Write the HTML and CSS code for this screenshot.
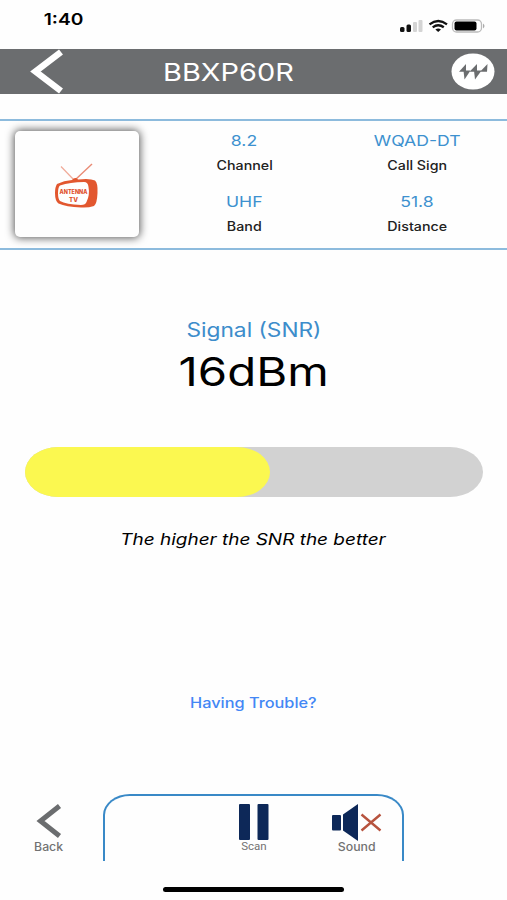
FILE: index.html
```html
<!DOCTYPE html>
<html lang="en">
<head>
<meta charset="utf-8">
<title>BBXP60R</title>
<link rel="stylesheet" href="styles.css">
</head>
<body>
<main class="phone">
  <div class="status">
    <span class="clock wide">1:40</span>
    <svg class="status-icons" width="90" height="18" viewBox="0 0 90 18">
      <g fill="#111"><rect x="2" y="10" width="4.500" height="5" rx="1.500"/><rect x="8.500" y="7.500" width="4.500" height="7.500" rx="1.500"/></g>
      <g fill="#d4d4d4"><rect x="15" y="5" width="4" height="10" rx="1"/><rect x="20.500" y="3" width="4" height="12" rx="1"/></g>
      <g fill="none" stroke="#111" stroke-width="2.300"><path d="M31.500 7.300Q40.200 .700 49 7.300"/><path d="M34.700 10.300Q40.200 6.200 45.800 10.300"/></g>
      <path d="M37.400 12.400Q40.200 10.600 43 12.400L40.200 15Z" fill="#111"/>
      <rect x="54.500" y="3" width="29" height="12" rx="4" fill="#fff" stroke="#bbb" stroke-width="1.300"/>
      <rect x="56.500" y="4.500" width="22" height="9" rx="2" fill="#000"/>
      <path d="M85 6.500Q88 9 85 11.500Z" fill="#aaa"/>
    </svg>
  </div>
  <header class="bar">
    <svg class="bar-back" width="34" height="45" viewBox="0 0 34 45"><path d="M31 3L5.500 22.500L31 42" fill="none" stroke="#fff" stroke-width="6.500"/></svg>
    <h1 class="title wide">BBXP60R</h1>
    <svg class="logo" width="44" height="37" viewBox="0 0 44 37">
      <ellipse cx="22" cy="18.500" rx="21.500" ry="18" fill="#fff"/>
      <g fill="#6b6d6f"><path d="M8 18.800L15 11V18.800Z"/><path d="M12.500 17.500H19.500L13.500 26.500Z"/><path d="M18.500 18.800L26 11V18.800Z"/><path d="M23 17.500H30.500L24 26.500Z"/><path d="M29 18.800L36.500 11L36 18.800Z"/></g>
    </svg>
  </header>
  <section class="info">
    <div class="card">
      <svg width="46" height="46" viewBox="0 0 46 46">
        <path d="M7 3.500L20.500 17.500" stroke="#f0aa98" stroke-width="1.200"/><path d="M38 1L20.500 17.500" stroke="#e98a74" stroke-width="1.400"/>
        <path fill="#e2572f" fill-rule="evenodd" d="M3 21Q10 17.500 18 17Q21 13.500 24 16.500Q36 15 41 17.500Q44 20 43.500 30Q43 41 40 43Q34 45 27 44.500Q12 44 4.500 40.500Q1 38 1 30Q1 24 3 21ZM6 22.500Q16 19 30 19Q34 19 34.500 24Q36 32 32.500 39Q31.500 42 27 42Q12 41.500 6 38Q4 36 4 30Q4 24 6 22.500Z"/>
        <g fill="#e04f2c" font-family="Inter, sans-serif" font-weight="800" text-anchor="middle"><text x="19.500" y="31" font-size="6" textLength="28" lengthAdjust="spacingAndGlyphs">ANTENNA</text><text x="19.500" y="38.500" font-size="6" textLength="9" lengthAdjust="spacingAndGlyphs">TV</text></g>
      </svg>
    </div>
    <dl class="facts">
      <div class="fact"><dd class="wide">8.2</dd><dt class="wide">Channel</dt></div>
      <div class="fact"><dd class="wide">WQAD-DT</dd><dt class="wide">Call Sign</dt></div>
      <div class="fact"><dd class="wide">UHF</dd><dt class="wide">Band</dt></div>
      <div class="fact"><dd class="wide">51.8</dd><dt class="wide">Distance</dt></div>
    </dl>
  </section>
  <section class="signal">
    <h2 class="signal-label wide">Signal (SNR)</h2>
    <p class="signal-value wide">16dBm</p>
    <div class="meter"><div class="fill"></div></div>
    <p class="hint wide">The higher the SNR the better</p>
    <a class="help wide">Having Trouble?</a>
  </section>
  <footer class="footer">
    <div class="back">
      <svg width="26" height="34" viewBox="0 0 26 34"><path d="M23.500 2L4.500 17L23.500 32" fill="none" stroke="#6b6d6f" stroke-width="5"/></svg>
      <span class="caption wide">Back</span>
    </div>
    <nav class="dock">
      <span></span>
      <div class="action">
        <svg width="30" height="36" viewBox="0 0 30 36" fill="#0d2858"><rect width="11" height="36" rx="1"/><rect x="18.500" width="11" height="36" rx="1"/></svg>
        <span class="caption scan">Scan</span>
      </div>
      <div class="action sound">
        <svg width="50" height="37" viewBox="0 0 50 37"><g fill="#0d2858"><rect y="11" width="9" height="15.500" rx="1"/><path d="M11 10.500L26 0V37L11 26.500Z"/></g><path d="M29.500 10.500L48.500 26.500M48.500 10.500L29.500 26.500" stroke="#b7533e" stroke-width="2.400"/></svg>
        <span class="caption wide">Sound</span>
      </div>
    </nav>
  </footer>
  <div class="home"></div>
</main>
</body>
</html>
```
FILE: styles.css
```css
* { box-sizing: border-box; margin: 0; }
body { background: #fefefe; font-family: Inter, "Liberation Sans", sans-serif; color: #000; }
.phone { width: 507px; height: 900px; display: flex; flex-direction: column; overflow: hidden; }
.wide { display: block; white-space: nowrap; transform: scaleX(1.2); }
.status { height: 49px; flex: none; display: flex; justify-content: space-between; padding: 9px 19px 0 47px; }
.clock { font-size: 16px; line-height: 20px; font-weight: 600; }
.status-icons { margin-top: 8px; }
.bar { height: 45px; flex: none; background: #6b6d6f; display: grid; grid-template-columns: 100px 257px 150px; align-items: center; }
.bar-back { margin-left: 30px; }
.title { font-size: 24.500px; line-height: 30px; font-weight: 400; color: #fff; justify-self: center; transform: scaleX(1.18); }
.logo { justify-self: end; margin-right: 12px; }
.info { height: 131px; flex: none; margin-top: 25px; border-top: 2px solid #8dbbdd; border-bottom: 2px solid #8dbbdd; display: flex; }
.card { width: 124px; height: 106px; margin: 10px 0 0 15px; background: #fefefe; border-radius: 5px; box-shadow: 0 0 8px 1px rgba(0,0,0,.65); display: flex; align-items: center; justify-content: center; padding-top: 3px; }
.facts { width: 345px; margin: 10px 0 0 19px; display: grid; grid-template-columns: 1fr 1fr; grid-template-rows: 61px 61px; }
.fact { display: flex; flex-direction: column; align-items: center; }
.fact dd { font-size: 14.700px; line-height: 20px; color: #3d91cf; }
.fact dt { font-size: 12.500px; line-height: 20px; margin-top: 5px; color: #222; font-weight: 500; transform: scaleX(1.14); }
.signal { flex: 1; display: flex; flex-direction: column; align-items: center; }
.signal-label { margin-top: 68px; font-size: 19.500px; line-height: 24px; font-weight: 400; color: #3d8dcb; transform: scaleX(1.165); }
.signal-value { margin-top: 6px; font-size: 39.500px; line-height: 48px; }
.meter { width: 458px; height: 50px; margin-top: 51px; border-radius: 33px / 25px; background: #d2d2d2; }
.fill { width: 245px; height: 50px; border-radius: 33px / 25px; background: #fbf850; }
.hint { margin-top: 32px; font-size: 16px; line-height: 20px; font-style: italic; transform: scaleX(1.185); }
.help { margin-top: 144px; font-size: 14px; line-height: 20px; font-weight: 500; color: #4387f5; transform: scaleX(1.165); }
.footer { height: 67px; flex: none; display: flex; }
.back { width: 97px; display: flex; flex-direction: column; align-items: center; padding-top: 10px; }
.caption { font-size: 11.500px; line-height: 14px; color: #727272; font-weight: 500; transform: scaleX(1.07); }
.back .caption { margin-top: 2px; }
.dock { width: 301px; margin-left: 6px; border: 2px solid #3989c7; border-bottom: 0; border-radius: 27px 27px 0 0 / 21px 21px 0 0; display: grid; grid-template-columns: 98px 102px 97px; }
.action { display: flex; flex-direction: column; align-items: center; padding-top: 8px; }
.sound { padding-left: 7px; }
.sound .caption { margin: -1px 0 0 -1px; }
.scan { font-family: Roboto, sans-serif; font-weight: 400; font-size: 11.500px; margin-top: -1px; transform: none; }
.home { width: 181px; height: 5px; border-radius: 3px; background: #000; margin: 26px auto 8px; flex: none; }
```
